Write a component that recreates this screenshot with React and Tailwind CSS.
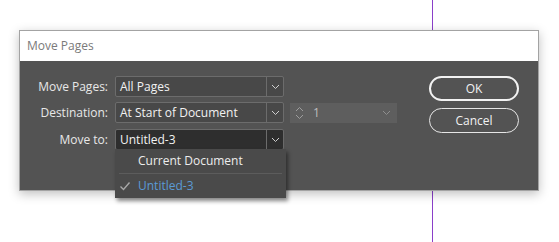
const Chevron = ({ className = '' }) => (
  <svg width="9" height="6" viewBox="0 0 9 6" className={className}>
    <polyline points="1,1 4.5,4.5 8,1" fill="none" stroke="currentColor" strokeWidth="1" />
  </svg>
)

const Select = ({ value, dark }) => (
  <div
    className={`flex h-[21px] w-[169px] items-stretch rounded-[2px] border ${
      dark ? 'border-[#6a6a6a] bg-[#2e2e2e]' : 'border-[#6c6c6c] bg-[#484848]'
    }`}
  >
    <span className="flex-1 truncate pl-[4px] text-[12px] leading-[19px] text-[#f2f2f2]">{value}</span>
    <span className="flex w-[17px] items-center justify-center border-l border-[#6c6c6c] text-[#cfcfcf]">
      <Chevron />
    </span>
  </div>
)

export default function App() {
  return (
    <div className="relative h-[242px] w-[559px] overflow-hidden bg-white font-['Open_Sans','Noto_Sans',sans-serif]">
      {/* page guide behind the dialog */}
      <div className="absolute left-[432px] top-0 h-full w-px bg-[#8a3fc9]" />

      <div className="relative ml-[19px] mt-[30px] w-[520px] border border-[#a3a3a3] shadow-[0_3px_10px_rgba(0,0,0,0.25)]">
        <div className="flex h-[30px] items-center bg-white pl-[7px] text-[12px] text-[#7a7a7a]">Move Pages</div>

        <div className="flex h-[129px] bg-[#535353] pt-[15px]">
          <div className="grid grid-cols-[76px_auto] content-start items-center gap-x-[7px] gap-y-[5px] pl-[12px]">
            <span className="text-right text-[12px] text-[#e8e8e8]">Move Pages:</span>
            <Select value="All Pages" />

            <span className="text-right text-[12px] text-[#e8e8e8]">Destination:</span>
            <div className="flex items-center gap-[6px]">
              <Select value="At Start of Document" />
              <div className="flex h-[20px] w-[107px] items-center bg-[#5e5e5e] pl-[5px] pr-[6px] text-[#9e9e9e]">
                <svg width="9" height="14" viewBox="0 0 9 14">
                  <polyline points="1,5 4.5,1.5 8,5" fill="none" stroke="currentColor" strokeWidth="1" />
                  <polyline points="1,9 4.5,12.5 8,9" fill="none" stroke="currentColor" strokeWidth="1" />
                </svg>
                <span className="ml-[9px] flex-1 text-[12px] text-[#bdbdbd]">1</span>
                <Chevron className="text-[#8e8e8e]" />
              </div>
            </div>

            <span className="mt-[1px] text-right text-[12px] text-[#e8e8e8]">Move to:</span>
            <div className="relative mt-[1px]">
              <Select value="Untitled-3" dark />
              <div className="absolute left-0 top-[20px] z-10 w-[171px] bg-[#4a4a4a] shadow-[2px_3px_4px_rgba(0,0,0,0.45)]">
                <div className="flex h-[24px] items-center pl-[23px] text-[12px] text-[#ededed]">Current Document</div>
                <div className="mx-[4px] h-px bg-[#5c5c5c]" />
                <div className="flex h-[24px] items-center pl-[4px] text-[12px] text-[#5b9ad6]">
                  <svg width="12" height="10" viewBox="0 0 12 10" className="mr-[7px] text-[#a8a8a8]">
                    <polyline points="1.5,5.5 4.5,8.5 10.5,1.5" fill="none" stroke="currentColor" strokeWidth="1.4" />
                  </svg>
                  Untitled-3
                </div>
              </div>
            </div>
          </div>

          <div className="ml-auto mr-[19px] flex flex-col gap-[7px]">
            <button className="h-[25px] w-[90px] rounded-full border-2 border-[#f2f2f2] text-[12px] text-[#f2f2f2]">OK</button>
            <button className="h-[25px] w-[90px] rounded-full border border-[#e6e6e6] text-[12px] text-[#f2f2f2]">Cancel</button>
          </div>
        </div>
      </div>
    </div>
  )
}
